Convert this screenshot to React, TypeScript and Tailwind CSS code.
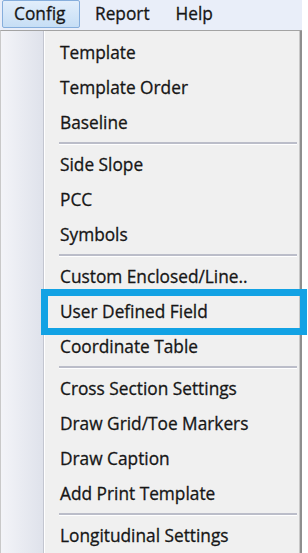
const groups: string[][] = [
  ["Template", "Template Order", "Baseline"],
  ["Side Slope", "PCC", "Symbols"],
  ["Custom Enclosed/Line..", "User Defined Field", "Coordinate Table"],
  ["Cross Section Settings", "Draw Grid/Toe Markers", "Draw Caption", "Add Print Template"],
  ["Longitudinal Settings"],
];

export default function App() {
  return (
    <div
      className="relative w-[308px] h-[553px] overflow-hidden bg-white text-[#161616] [-webkit-text-stroke:0.3px_#161616]"
      style={{ fontFamily: '"Open Sans", "Noto Sans", sans-serif' }}
    >
      {/* menu bar */}
      <div className="flex h-[30px] w-[302px] items-start bg-[#e9eef9] text-[17.3px]">
        <div className="ml-[2px] mt-0 flex h-[28px] w-[78px] items-center rounded-[2px] border border-[#86aedc] bg-gradient-to-b from-[#e2eefb] to-[#c6def5] pl-[11px] leading-none">
          Config
        </div>
        <div className="ml-[15px] flex h-[28px] items-center leading-none">Report</div>
        <div className="ml-[26px] flex h-[28px] items-center leading-none">Help</div>
      </div>

      {/* dropdown */}
      <div className="flex h-[523px] w-[302px] border-t border-l border-t-[#a3a3a3] border-l-[#c9c9c9]">
        {/* gutter */}
        <div className="flex h-full">
          <div className="h-full w-[42px] bg-gradient-to-r from-[#f3f4f8] to-[#dfe2eb]" />
          <div className="h-full w-[1px] bg-[#c3c6d0]" />
          <div className="h-full w-[1px] bg-white" />
        </div>
        {/* items */}
        <div className="flex-1 bg-[#f0f0f0] pt-[4px] text-[17.3px]">
          {groups.map((g, gi) => (
            <div key={gi}>
              {gi > 0 && (
                <div className="flex h-[7px] flex-col justify-center pl-[14px] pr-[2px]">
                  <div className="h-[2px] bg-[#bbbdc9]" />
                  <div className="h-[1px] bg-white" />
                </div>
              )}
              {g.map((item) => (
                <div key={item} className="flex h-[35px] items-center pl-[15px] leading-none">
                  {item}
                </div>
              ))}
            </div>
          ))}
        </div>
        <div className="h-full w-[1px] bg-[#c8c8c8]" />
        <div className="h-full w-[2px] bg-[#8e8e8e]" />
      </div>

      {/* highlight box */}
      <div className="absolute left-[41px] top-[289px] h-[46px] w-[266px] border-[7px] border-[#12a2e4]" />
    </div>
  );
}
